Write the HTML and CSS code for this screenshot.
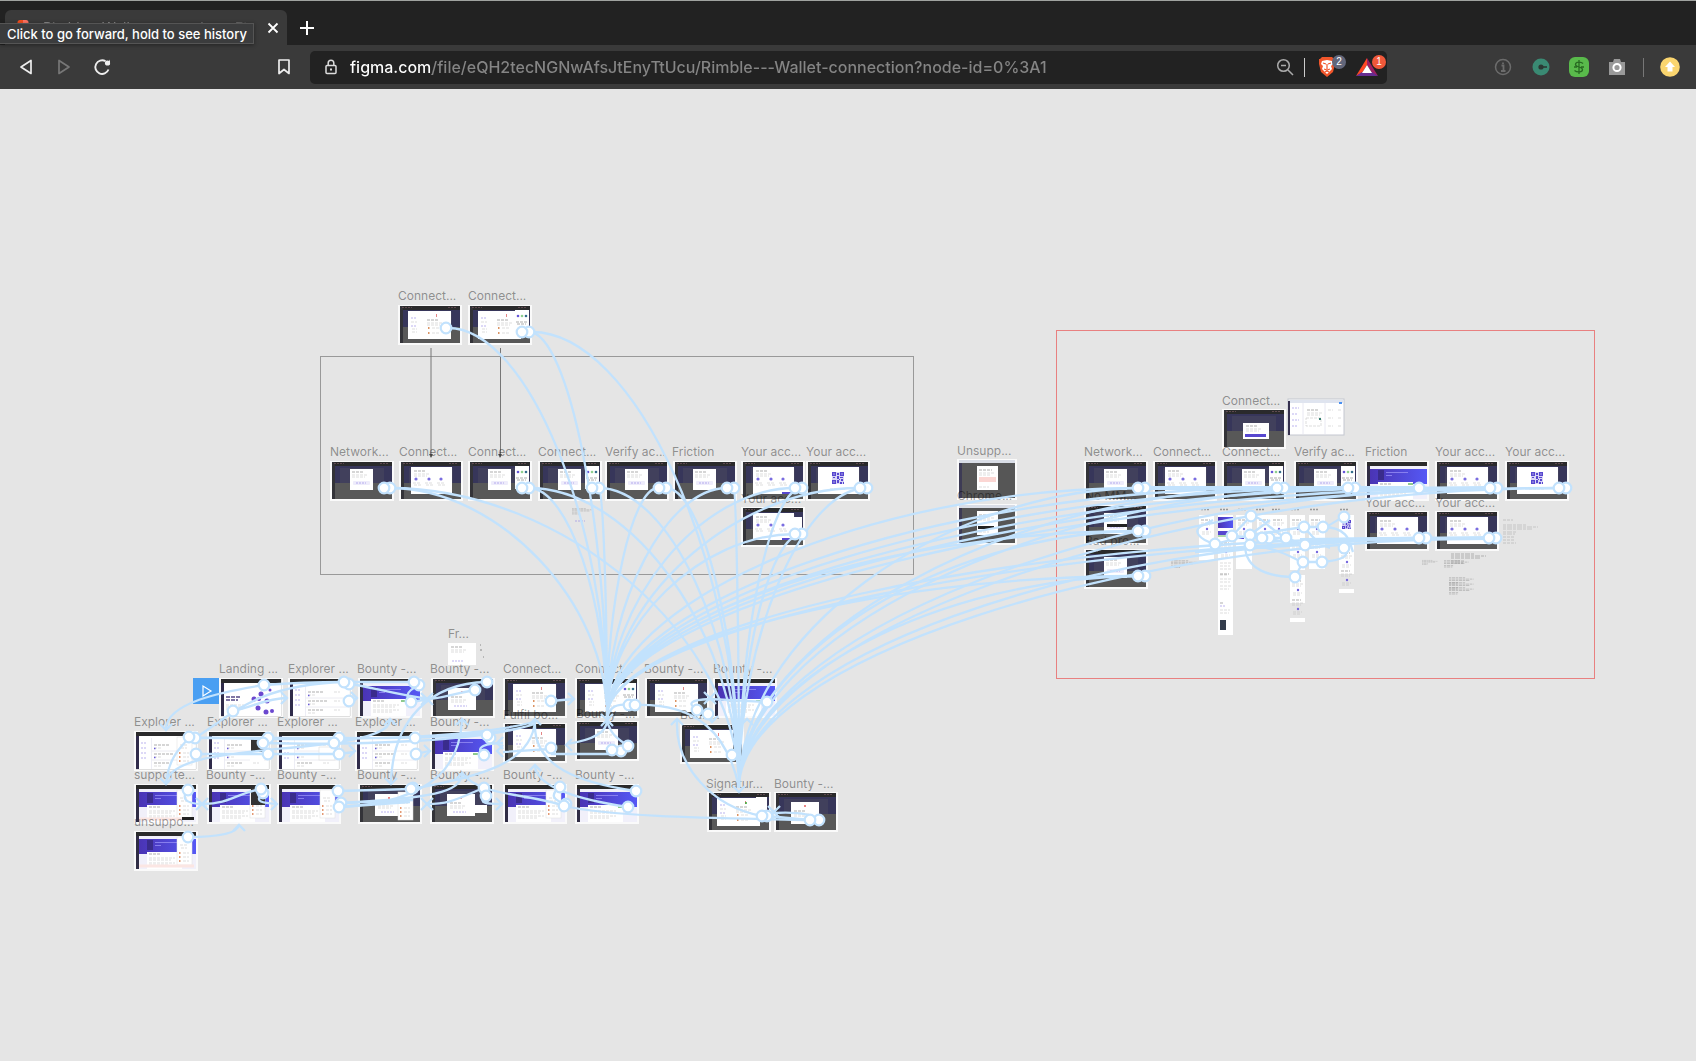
FILE: index.html
```html
<!DOCTYPE html>
<html lang="en">
<head>
<meta charset="utf-8">
<title>Rimble - Wallet connection – Figma</title>
<link rel="stylesheet" href="styles.css">
</head>
<body>
<header class="browser">
  <div class="tabstrip">
    <div class="tab">
      <svg class="favicon" width="12" height="16" viewBox="0 0 12 16"><path d="M3 0h3v5H3a2.500 2.500 0 0 1 0-5z" fill="#f24e1e"/><path d="M6 0h3a2.500 2.500 0 0 1 0 5H6z" fill="#ff7262"/><circle cx="8.500" cy="8" r="2.500" fill="#1abcfe"/></svg>
      <span class="tab-title">Rimble - Wallet connection – Figma</span>
      <button class="icon-btn tab-close" aria-label="Close tab"><svg width="12" height="12" viewBox="0 0 12 12"><path d="M1.500 1.500l9 9M10.500 1.500l-9 9" stroke="#fff" stroke-width="1.800"/></svg></button>
    </div>
    <button class="icon-btn new-tab" aria-label="New tab"><svg width="14" height="14" viewBox="0 0 14 14"><path d="M7 0v14M0 7h14" stroke="#fff" stroke-width="2"/></svg></button>
    <div class="tooltip" role="tooltip">Click to go forward, hold to see history</div>
  </div>
  <div class="toolbar">
    <nav class="nav">
      <button class="icon-btn" aria-label="Back"><svg width="16" height="18" viewBox="0 0 16 18"><path d="M13 2.500v13L3 9z" fill="none" stroke="#eee" stroke-width="1.700" stroke-linejoin="round"/></svg></button>
      <button class="icon-btn" aria-label="Forward"><svg width="16" height="18" viewBox="0 0 16 18"><path d="M3 2.500v13L13 9z" fill="none" stroke="#777" stroke-width="1.700" stroke-linejoin="round"/></svg></button>
      <button class="icon-btn" aria-label="Reload"><svg width="18" height="18" viewBox="0 0 18 18"><path d="M15.500 11.500A6.800 6.800 0 1 1 12.500 3.200" fill="none" stroke="#eee" stroke-width="1.900"/><circle cx="14.500" cy="5" r="2.600" fill="#eee"/><path d="M17 1.500v5h-3z" fill="#eee"/></svg></button>
      <button class="icon-btn bookmark" aria-label="Bookmark"><svg width="14" height="18" viewBox="0 0 14 18"><path d="M2 2h10v13.500l-5-4-5 4z" fill="none" stroke="#eee" stroke-width="1.700" stroke-linejoin="round"/></svg></button>
    </nav>
    <div class="omnibox">
      <svg width="14" height="16" viewBox="0 0 14 16"><rect x="2" y="6.500" width="10" height="8" rx="1" fill="none" stroke="#ddd" stroke-width="1.500"/><path d="M4.200 6V4a2.800 2.800 0 0 1 5.600 0v2" fill="none" stroke="#ddd" stroke-width="1.500"/><rect x="6" y="9.500" width="2" height="2" fill="#ddd"/></svg>
      <input class="url" type="text" aria-label="Address" value="figma.com/file/eQH2tecNGNwAfsJtEnyTtUcu/Rimble---Wallet-connection?node-id=0%3A1">
      <button class="icon-btn" aria-label="Zoom"><svg width="18" height="18" viewBox="0 0 18 18"><circle cx="7.500" cy="7.500" r="5.800" fill="none" stroke="#aaa" stroke-width="1.500"/><path d="M5 7.500h5M12 12l5 5" stroke="#aaa" stroke-width="1.500"/></svg></button>
      <span class="divider light"></span>
      <button class="icon-btn shields" aria-label="Brave Shields"><svg width="20" height="22" viewBox="0 0 20 22"><path d="M5 1h10l2 2 1 0 0 5-2 8-6 5-6-5L2 8V3l1 0z" fill="#f1562b"/><path d="M5 5l5-1 5 1 1 3-2 2 1 3-5 5-5-5 1-3-2-2z" fill="#fff"/><path d="M6 7l3 1M14 7l-3 1M10 8v5M7 13l3 1 3-1M8 16l2-1 2 1" stroke="#f1562b" stroke-width="1.200" fill="none"/></svg><span class="badge gray">2</span></button>
      <button class="icon-btn rewards" aria-label="Brave Rewards"><svg width="22" height="18" viewBox="0 0 22 18"><path d="M11 0L0 18l6-3 5-8z" fill="#ff4724"/><path d="M11 0l11 18-6-3-5-8z" fill="#9e1f63"/><path d="M0 18h22l-6-4H6z" fill="#662d91"/><path d="M11 7l5 8H6z" fill="#fff"/></svg><span class="badge orange">1</span></button>
    </div>
    <div class="extensions">
      <button class="icon-btn" aria-label="Site info"><svg width="18" height="18" viewBox="0 0 18 18"><circle cx="9" cy="9" r="7.500" fill="none" stroke="#6c6c6c" stroke-width="1.500"/><path d="M7.500 7.500H9.500V13M7 13h4.500M9 4.500v1.500" stroke="#6c6c6c" stroke-width="1.800" fill="none"/></svg></button>
      <button class="icon-btn" aria-label="Extension"><svg width="18" height="18" viewBox="0 0 18 18"><circle cx="9" cy="9" r="8.500" fill="#3a8a73"/><circle cx="9" cy="9" r="2.600" fill="#2c3934"/><path d="M9 9h6" stroke="#2c3934" stroke-width="1.600"/></svg></button>
      <button class="icon-btn" aria-label="Payments"><svg width="20" height="20" viewBox="0 0 20 20"><rect x="0" y="0" width="20" height="20" rx="6" fill="#59ba4b"/><path d="M14 6.500C12 4.500 6.500 4.500 6.500 7.500S13.500 9.500 13.500 12.500 8 15.500 5.500 13.500M10 3v14M5 10h3M12 10h3" fill="none" stroke="#286a22" stroke-width="1.300"/></svg></button>
      <button class="icon-btn" aria-label="Screenshot"><svg width="18" height="18" viewBox="0 0 18 18"><path d="M1 4h4l1-3h6l1 3h4v13H1z" fill="#999"/><circle cx="9" cy="9.500" r="3.600" fill="#999" stroke="#fff" stroke-width="2"/></svg></button>
      <span class="divider"></span>
      <button class="icon-btn" aria-label="Update"><svg width="20" height="20" viewBox="0 0 20 20"><circle cx="10" cy="10" r="9.800" fill="#fad56f"/><path d="M10 4.500l5 5.500h-2.500v4.500h-5V10H5z" fill="#fff"/></svg></button>
    </div>
  </div>
</header>
<main class="canvas">
<svg class="board" viewBox="0 89 1696 972" role="img" aria-label="Wallet connection flow">
  <defs>
    <linearGradient id="violet"><stop offset="0" stop-color="#4a34b4"/><stop offset="1" stop-color="#5558f5"/></linearGradient>
    <g id="dark"><rect width="64" height="40" fill="#fafafa"/><rect x="2" y="1" width="60" height="37" fill="#585858"/><rect x="2" y="5" width="60" height="17" fill="#37365a"/><path d="M10 22V7h44v15" fill="#41405c"/><rect x="2" y="1" width="60" height="4" fill="#2a2a2b"/><rect x="2" y="1" width="3" height="37" fill="#333338"/><path d="M4 2.500h10M50 2.500h8" stroke="#77595f" stroke-width=".7" stroke-dasharray="2 1"/></g>
    <g id="text"><path d="M0 1h12" class="ink"/><path d="M0 4h16M0 6h13" class="faint"/></g>
    <g id="small"><use href="#dark"/><rect x="20" y="8" width="23" height="21" fill="#fff"/><use href="#text" x="22" y="10"/><rect x="23" y="20" width="17" height="4" rx="1" fill="#eeecfb"/><path d="M26 22h10" class="vio"/></g>
    <g id="panel"><rect x="47" y="5" width="14" height="23" fill="#fff"/><circle cx="50" cy="11" r="1.300" fill="#6657d8"/><circle cx="54" cy="11" r="1.300" fill="#8fd08f"/><circle cx="58" cy="11" r="1.300" fill="#356f8c"/><path d="M48 17h11M49 19h9" class="ink"/></g>
    <g id="smallp"><use href="#small"/><use href="#panel"/></g>
    <g id="wide"><use href="#dark"/><rect x="12" y="6" width="41" height="27" fill="#fff"/><use href="#text" x="15" y="9"/><circle cx="17" cy="18" r="1.600" fill="#7a6de0"/><circle cx="30" cy="18" r="1.600" fill="#7a6de0"/><circle cx="42" cy="18" r="1.600" fill="#7a6de0"/><path d="M14 22h8M26 22h8M38 22h8M15 24h7M27 24h7M39 24h7" class="faint"/></g>
    <g id="large"><use href="#dark"/><rect x="10" y="6" width="43" height="28" fill="#fff"/><path d="M13 13h6M13 21h6" class="vio"/><path d="M13 17h6M14 24h5M14 27h5" class="faint"/><use href="#text" x="29" y="14"/><path d="M38.500 9v3" stroke="#d66" stroke-width=".8"/><path d="M30 23h1.500M30 28h1.500" stroke="#d07030" stroke-width="1.500"/><path d="M34 23h8M34 28h8" class="faint"/></g>
    <g id="largep"><use href="#large"/><use href="#panel"/></g>
    <g id="qr"><rect width="12" height="12" fill="#d9d5f6"/><path d="M0 0h4v4H0zM8 0h4v4H8zM0 8h4v4H0zM5 1h2v2H5zM5 4h2v3H5zM1 5h2v1H1zM8 5h3v1H8zM9 7h2v2H9zM5 8h2v3H5zM8 10h2v2H8zM11 10h1v2h-1zM7 7h1v1H7z" fill="#5747cf"/><path d="M1.500 1.500h1v1h-1zM9.500 1.500h1v1h-1zM1.500 9.500h1v1h-1z" fill="#fff"/></g>
    <g id="code"><use href="#dark"/><rect x="12" y="6" width="41" height="27" fill="#fff"/><use href="#qr" x="26" y="11"/><path d="M24 28h16" class="faint"/></g>
    <g id="tall"><use href="#dark"/><rect x="17" y="10" width="28" height="22" fill="#fff"/><path d="M31 13v2" stroke="#d44" stroke-width="1.300"/><use href="#text" x="20" y="18"/><path d="M23 28h13" class="vio"/></g>
    <g id="bounty"><rect width="64" height="40" fill="#fafafa"/><rect x="2" y="1" width="60" height="37" fill="#f1f0fa"/><rect x="2" y="1" width="60" height="4" fill="#2a2a2b"/><rect x="2" y="5" width="3" height="33" fill="#302d45"/><rect x="5" y="8" width="57" height="15" fill="url(#violet)"/><rect x="13" y="21" width="35" height="17" fill="#fff"/><rect x="13" y="9" width="6" height="10" fill="#3a2c8c"/><path d="M21 11.500h22M21 14.500h6" stroke="#958df5" stroke-width=".8"/><path d="M15 23h12" class="ink"/><path d="M15 27h26M15 29h22M15 32h26M15 34h20" class="faint"/><path d="M43 23h5" stroke="#68b868" stroke-width="1.500"/></g>
    <g id="side"><rect x="43" y="6" width="15" height="28" fill="#fff" stroke="#ddd" stroke-width=".5"/><path d="M46 14h7M47 17h6" class="faint"/><path d="M45 22h1.500M45 26h1.500M45 30h1.500" stroke="#da7a48" stroke-width="1.500"/><path d="M49 22h6M49 26h6M49 30h6" class="faint"/></g>
    <g id="bountys"><use href="#bounty"/><use href="#side"/></g>
    <g id="explore"><rect width="64" height="40" fill="#fafafa"/><rect x="2" y="1" width="60" height="37" fill="#fff"/><path d="M2 38.500h60M62.300 1v37" stroke="#ccc" stroke-width=".6"/><rect x="2" y="1" width="60" height="4" fill="#2a2a2b"/><rect x="2" y="5" width="3" height="33" fill="#2f2b4a"/><rect x="17" y="7" width="1" height="31" fill="#ededf5"/><path d="M7 12h6M7 17h5M7 22h6M7 27h5" class="vio"/><path d="M20 14h15M20 23h20M20 32h15" class="ink"/><path d="M20 17h8M20 26h8M20 35h8M46 14h6M46 23h6M46 32h6" class="faint"/><path d="M20 17.500h1.500M20 26.500h1.500" stroke="#6657d8" stroke-width="1.300"/><path d="M18 20h43M18 29h43" stroke="#ececf2"/></g>
    <g id="explores"><use href="#explore"/><use href="#side"/></g>
    <g id="chrome"><rect width="60" height="41" fill="#fafafa"/><rect x="2" y="1" width="56" height="3" fill="#d9dde6"/><rect x="2" y="4" width="56" height="35" fill="#565656"/><rect x="2" y="4" width="3" height="35" fill="#3d3b55"/><rect x="20" y="7" width="21" height="24" fill="#fff"/><path d="M22 11h13" class="ink"/><path d="M22 14h15M22 16h12M22 28h10" class="faint"/></g>
    <g id="phone"><path d="M2 3h9" class="ink"/><path d="M2 6h11M2 8h9M3 15h9M3 17h7" class="faint"/><circle cx="8" cy="12" r="1.200" fill="#7668de"/></g>
    <g id="note"><path d="M0 1h24M0 3h35M0 5h30M0 8h14M0 10h12" stroke="#999" stroke-width=".7" stroke-dasharray="3 1 5 1"/></g>
    <circle id="dot" r="5.300"/>
    <path id="up" d="M-6 6L0 0l6 6"/><path id="down" d="M-6-6L0 0l6-6"/><path id="right" d="M-6-6L0 0l-6 6"/><path id="left" d="M6-6L0 0l6 6"/><path id="cross" d="M-6-6L6 6M6-6L-6 6"/>
  </defs>

  <g class="frames">
    <rect x="320.500" y="356.500" width="593" height="218" stroke="#999"/>
    <rect x="1056.500" y="330.500" width="538" height="348" stroke="#e88080"/>
    <path d="M431 348v109M500.500 348v109" stroke="#777"/>
    <path d="M429 454h4l-2 4zM498 454h4l-2 4z" fill="#555"/>
  </g>

  <g class="screens">
    <use href="#large" x="398" y="305"/><use href="#largep" x="468" y="305"/>
    <use href="#small" x="330" y="461"/><use href="#wide" x="399" y="461"/><use href="#smallp" x="468" y="461"/><use href="#smallp" x="538" y="461"/><use href="#small" x="605" y="461"/><use href="#small" x="673" y="461"/><use href="#wide" x="741" y="461"/><use href="#code" x="806" y="461"/>
    <use href="#wide" x="741" y="507"/><rect x="788" y="517" width="14" height="14" fill="#fff"/>
    <rect x="782" y="538" width="9" height="2" fill="#5747cf"/><rect x="782" y="492" width="9" height="2" fill="#5747cf"/>
    <use href="#note" transform="translate(572 508) scale(.6)"/><path d="M575 521h10" class="vio"/>
    <use href="#chrome" x="957" y="459"/><rect x="979" y="477" width="17" height="5" fill="#fbd6d3"/>
    <use href="#chrome" x="957" y="504"/><rect x="978" y="526" width="16" height="3" fill="#222"/>
    <use href="#dark" x="1222" y="409"/><rect x="1243" y="423" width="26" height="16" fill="#fff"/><use href="#text" x="1246" y="425"/><rect x="1245" y="434" width="21" height="3" fill="#5747cf"/>
    <rect x="1288" y="399" width="56" height="36" fill="#fff" stroke="#c4c7d0"/><rect x="1289" y="400" width="54" height="3" fill="#dfe4ef"/><rect x="1288" y="401" width="2" height="34" fill="#35304e"/><path d="M1303 403v31M1325 403v31" stroke="#e8e8f2"/><path d="M1292 408h7M1292 414h5M1292 420h7M1292 426h5" class="vio"/><use href="#text" x="1307" y="409"/><path d="M1306 418h15v8h-15zM1328 410h5m5 0h4M1328 418h5m5 0h4M1328 426h5m5 0h4" class="faint"/><path d="M1319 419h2" stroke="#357e70" stroke-width="2"/><path d="M1339 403h3" stroke="#4a90f0" stroke-width="2"/>
    <use href="#small" x="1084" y="461"/><use href="#wide" x="1153" y="461"/><use href="#smallp" x="1222" y="461"/><use href="#smallp" x="1294" y="461"/><use href="#bounty" x="1365" y="461"/><use href="#wide" x="1435" y="461"/><use href="#code" x="1505" y="461"/>
    <use href="#small" x="1084" y="505"/><rect x="1107" y="524" width="20" height="3" fill="#222"/><use href="#small" x="1084" y="549"/>
    <use href="#wide" x="1365" y="511"/><use href="#wide" x="1435" y="511"/>
    <g fill="#fff">
      <rect x="1199" y="515" width="15" height="45"/><rect x="1218" y="515" width="15" height="120"/><rect x="1236" y="515" width="16" height="54"/><rect x="1257" y="515" width="14" height="28"/><rect x="1271" y="515" width="16" height="28"/><rect x="1290" y="515" width="15" height="55"/><rect x="1309" y="515" width="16" height="54"/><rect x="1339" y="515" width="15" height="59"/><rect x="1290" y="575" width="15" height="28"/><rect x="1290" y="618" width="15" height="4"/><rect x="1339" y="589" width="15" height="4"/>
    </g>
    <rect x="1218" y="517" width="15" height="11" fill="url(#violet)"/><rect x="1218" y="531" width="15" height="4" fill="#5747cf"/><path d="M1218 536h8" stroke="#58b058"/><rect x="1238" y="537" width="6" height="2" fill="#5747cf"/>
    <use href="#qr" transform="translate(1342 520) scale(.75)"/>
    <use href="#phone" x="1199" y="517"/><use href="#phone" x="1236" y="517"/><use href="#phone" x="1257" y="517"/><use href="#phone" x="1271" y="517"/><use href="#phone" x="1290" y="517"/><use href="#phone" x="1309" y="517"/><use href="#phone" x="1290" y="540"/><use href="#phone" x="1309" y="540"/><use href="#phone" x="1339" y="550"/><use href="#phone" x="1290" y="578"/><use href="#phone" x="1290" y="597"/><use href="#phone" x="1339" y="568"/>
    <use href="#phone" x="1218" y="540"/><path d="M1220 563h11M1220 566h10M1220 569h11M1220 575h8M1220 579h11M1220 582h10M1220 586h11M1220 589h9M1220 610h10M1220 613h9" class="faint"/><path d="M1220 574h9M1220 603h4" class="ink"/><path d="M1220 606h6" class="vio"/><rect x="1220" y="620" width="6" height="10" fill="#333c4c"/>
    <path d="M1201 509.500h8M1220 509.500h8M1238 509.500h8M1256 509.500h8M1272 509.500h8M1291 509.500h8M1310 509.500h8M1340 509.500h8" stroke="#999" stroke-width="1.500" stroke-dasharray="2 1"/>
    <use href="#note" transform="translate(1171 560) scale(.75)"/><use href="#note" x="1503" y="524" opacity=".6"/><path d="M1503 520h10M1503 537h12M1503 540h11M1503 543h13" class="ink" opacity=".5"/>
    <use href="#note" x="1451" y="553"/><use href="#note" transform="translate(1422 560) scale(.45)"/><use href="#note" transform="translate(1444 560) scale(.7)"/><use href="#note" transform="translate(1449 577) scale(.7)"/><use href="#note" transform="translate(1449 582) scale(.7)"/><use href="#note" transform="translate(1449 587) scale(.7)"/>
    <rect x="193" y="678" width="26" height="26" fill="#4a9ff2"/><path d="M203 686v10l8-5z" fill="none" stroke="#fff" stroke-width="1.200"/>
    <use href="#explore" x="219" y="678"/><rect x="224" y="683" width="57" height="33" fill="#fff"/><path d="M226 697h14M226 700h12" stroke="#554a86" stroke-width="1.500" stroke-dasharray="4 1"/><path d="M226 705h18M226 707h15M226 709h17" class="faint"/><g fill="#6b48cf"><circle cx="254" cy="699" r="2.500"/><circle cx="259" cy="699" r="2"/><circle cx="261" cy="694" r="2.500"/><circle cx="267" cy="701" r="2.500"/><circle cx="258" cy="708" r="2.500"/><circle cx="266" cy="712" r="2.500"/><circle cx="272" cy="711" r="2"/><circle cx="270" cy="690" r="1.500"/></g>
    <use href="#explore" x="288" y="678"/><use href="#bounty" x="358" y="678"/><use href="#tall" x="431" y="678"/><use href="#large" x="503" y="678"/><use href="#largep" x="575" y="678"/><use href="#large" x="645" y="678"/><use href="#bounty" x="713" y="678"/>
    <use href="#explores" x="134" y="731"/><use href="#explore" x="207" y="731"/><rect x="251" y="737" width="14" height="15" fill="#333"/><rect x="250" y="753" width="14" height="8" fill="#fff"/><use href="#explore" x="277" y="731"/><rect x="319" y="747" width="16" height="13" fill="#fff" stroke="#ddd" stroke-width=".6"/><use href="#explore" x="355" y="731"/><use href="#bounty" x="430" y="731"/>
    <use href="#large" x="503" y="723"/><use href="#small" x="575" y="721"/><use href="#large" x="680" y="724"/>
    <use href="#bountys" x="134" y="784"/><rect x="182" y="817" width="12" height="3" fill="#222"/><use href="#bounty" x="207" y="784"/><use href="#side" x="207" y="784"/><rect x="251" y="788" width="14" height="17" fill="#333"/><use href="#bountys" x="277" y="784"/><use href="#tall" x="358" y="784"/><use href="#side" x="355" y="786"/><use href="#tall" x="430" y="784"/><rect x="473" y="805" width="14" height="8" fill="#fff"/><use href="#bountys" x="503" y="784"/><use href="#bounty" x="575" y="784"/>
    <use href="#bountys" x="134" y="831"/><path d="M139 866h55" stroke="#fbe6e3" stroke-width="3"/><path d="M139 819h43" stroke="#fbe6e3" stroke-width="3"/>
    <use href="#large" x="707" y="792"/><rect x="756" y="797" width="11" height="13" fill="#fff"/><path d="M746 802v2" stroke="#3a3" stroke-width="1.500"/><use href="#tall" x="774" y="792"/>
    <rect x="448" y="643" width="28" height="22" fill="#fff"/><use href="#text" x="451" y="646"/><path d="M452 661h11" class="vio"/><path d="M480 645h1M480 650h2M483 657h1" stroke="#888"/>
  </g>

  <g class="labels">
    <text x="398" y="300">Connect...</text><text x="468" y="300">Connect...</text>
    <text x="330" y="456">Network...</text><text x="399" y="456">Connect...</text><text x="468" y="456">Connect...</text><text x="538" y="456">Connect...</text><text x="605" y="456">Verify ac...</text><text x="672" y="456">Friction</text><text x="741" y="456">Your acc...</text><text x="806" y="456">Your acc...</text><text x="741" y="503">Your acc...</text>
    <text x="957" y="455">Unsupp...</text><text x="957" y="500">Chrome...</text>
    <text x="1222" y="405">Connect...</text>
    <text x="1084" y="456">Network...</text><text x="1153" y="456">Connect...</text><text x="1222" y="456">Connect...</text><text x="1294" y="456">Verify ac...</text><text x="1365" y="456">Friction</text><text x="1435" y="456">Your acc...</text><text x="1505" y="456">Your acc...</text>
    <text x="1085" y="500">No MM...</text><text x="1085" y="545">Bad pro...</text><text x="1365" y="507">Your acc...</text><text x="1435" y="507">Your acc...</text>
    <text x="448" y="638">Fr...</text>
    <text x="219" y="673">Landing ...</text><text x="288" y="673">Explorer ...</text><text x="357" y="673">Bounty -...</text><text x="430" y="673">Bounty -...</text><text x="503" y="673">Connect...</text><text x="575" y="673">Connect...</text><text x="644" y="673">Bounty -...</text><text x="713" y="673">Bounty -...</text>
    <text x="134" y="726">Explorer ...</text><text x="207" y="726">Explorer ...</text><text x="277" y="726">Explorer ...</text><text x="355" y="726">Explorer ...</text><text x="430" y="726">Bounty -...</text><text x="503" y="719">Fulfil bo...</text><text x="576" y="718">Bounty -...</text><text x="680" y="719">Boun...</text>
    <text x="134" y="779">supporte...</text><text x="206" y="779">Bounty -...</text><text x="277" y="779">Bounty -...</text><text x="357" y="779">Bounty -...</text><text x="430" y="779">Bounty -...</text><text x="503" y="779">Bounty -...</text><text x="575" y="779">Bounty -...</text>
    <text x="134" y="826">unsuppo...</text><text x="706" y="788">Signatur...</text><text x="774" y="788">Bounty -...</text>
  </g>

  <g class="links">
    <path d="M448 328C528 328 607 522 607 717M529 332C568 332 607 524 607 717M390 488C498 488 607 602 607 717M529 488C568 488 607 602 607 717M599 488C603 488 607 602 607 717M658 488C632 488 607 602 607 717M727 488C667 488 607 602 607 717M795 488C701 488 607 602 607 717M859 488C733 488 607 602 607 717M795 534C701 534 607 625 607 717"/>
    <path d="M1138 488C872 488 607 602 607 717M1138 531C872 531 607 624 607 717M1138 576C872 576 607 646 607 717M1277 488C942 488 607 602 607 717M1348 488C978 488 607 602 607 717M1419 488C1013 488 607 602 607 717M1490 488C1048 488 607 602 607 717M1559 488C1083 488 607 602 607 717M1419 538C1013 538 607 627 607 717M1490 538C1048 538 607 627 607 717"/>
    <path d="M532 332C635 332 739 560 739 788M390 488C564 488 739 638 739 788M529 488C634 488 739 638 739 788M599 488C669 488 739 638 739 788M666 488C702 488 739 638 739 788M734 488C736 488 739 638 739 788M802 488C770 488 739 638 739 788M867 488C803 488 739 638 739 788M802 534C770 534 739 661 739 788"/>
    <path d="M1144 488C941 488 739 638 739 788M1144 531C941 531 739 660 739 788M1144 576C941 576 739 682 739 788M1284 488C1011 488 739 638 739 788M1354 488C1046 488 739 638 739 788M1496 488C1117 488 739 638 739 788M1566 488C1152 488 739 638 739 788M1426 538C1082 538 739 663 739 788M1496 538C1117 538 739 663 739 788"/>
    <use href="#cross" x="607" y="720"/><use href="#down" x="739" y="792"/>

    <path d="M264 685C220 692 168 703 166 728M233 711C253 707 267 698 287 698M195 738C230 717 253 685 344 682M264 685C290 683 320 682 344 682M344 682H412M349 684C373 687 387 693 429 699M349 701L357 698M195 738H339C430 739 500 735 535 724M263 743C360 745 480 742 535 724M188 737C300 741 460 741 534 722M334 743C373 737 390 730 390 720M196 754L339 754 354 752M334 743C253 753 173 753 166 782M189 737C183 747 170 753 166 782M188 790C182 797 183 804 203 804C230 804 237 793 261 789M263 793C253 802 263 803 277 804M338 791L412 789M341 803L413 800M339 807L410 802M188 837C213 837 237 835 239 825"/>
    <path d="M419 685C403 693 407 698 411 702L430 699M475 690C447 695 440 699 427 699M487 682C430 683 393 720 391 782M551 701L574 699M416 754L429 751M484 755C473 747 487 743 503 743M551 749L503 752M612 754H551M607 720C607 733 593 740 567 744M607 720C610 735 620 740 628 746M339 807C440 802 460 760 462 720M341 803C430 798 462 793 462 773M411 789C480 777 533 763 535 720M484 788C460 797 453 804 427 804M462 773C480 797 530 793 564 806M486 796C477 803 487 804 501 804M560 787C547 797 557 801 566 804M636 791C580 783 533 767 535 723M628 807C580 800 535 787 535 765M564 806C613 817 713 818 810 820M629 705C613 703 608 710 607 720M635 705C697 703 727 733 739 787"/>
    <path d="M697 710C687 703 690 700 710 699L767 702M708 714L712 720M762 816C713 807 675 767 677 720M819 820C810 812 790 812 773 813M767 816L810 820"/>
    <use href="#down" x="166" y="730"/><use href="#right" x="287" y="698"/><use href="#right" x="357" y="698"/><use href="#up" x="390" y="719"/><use href="#right" x="355" y="751"/><use href="#down" x="166" y="784"/><use href="#cross" x="202" y="804"/><use href="#right" x="277" y="804"/><use href="#up" x="239" y="825"/>
    <use href="#cross" x="427" y="699"/><use href="#right" x="574" y="699"/><use href="#up" x="462" y="719"/><use href="#up" x="535" y="719"/><use href="#right" x="430" y="751"/><use href="#down" x="391" y="784"/><use href="#left" x="497" y="743"/><use href="#left" x="497" y="751"/><use href="#left" x="566" y="745"/><use href="#up" x="462" y="773"/><use href="#cross" x="427" y="804"/><use href="#right" x="502" y="804"/><use href="#up" x="535" y="765"/>
    <use href="#cross" x="710" y="698"/><use href="#up" x="677" y="719"/><use href="#up" x="747" y="719"/><use href="#cross" x="774" y="812"/><use href="#down" x="712" y="722"/>

    <path d="M1215 544C1200 540 1190 530 1204 525L1213 520M1232 536L1251 516C1262 516 1270 530 1286 538M1215 544L1250 535 1304 527M1232 536L1262 538 1304 545M1245 545C1245 570 1270 577 1295 577M1250 545C1280 548 1295 560 1303 562L1322 562C1345 560 1350 555 1344 548M1304 527H1323C1350 527 1350 545 1353 552M1304 527C1315 540 1320 545 1330 548M1344 517C1335 520 1330 527 1323 527M1303 562L1295 577M1195 552L1360 541M1305 545L1286 538 1262 538M1250 535L1270 520"/>
    <path d="M1150 488H1419M1370 489L1490 488M1300 540L1490 538" stroke-width="4"/>
  </g>

  <g class="dots">
    <use href="#dot" x="446" y="328"/><use href="#dot" x="529" y="332"/><use href="#dot" x="522" y="332"/>
    <use href="#dot" x="390" y="488"/><use href="#dot" x="384" y="488"/><use href="#dot" x="529" y="488"/><use href="#dot" x="522" y="488"/><use href="#dot" x="599" y="488"/><use href="#dot" x="592" y="488"/><use href="#dot" x="666" y="488"/><use href="#dot" x="659" y="488"/><use href="#dot" x="734" y="488"/><use href="#dot" x="727" y="488"/><use href="#dot" x="802" y="488"/><use href="#dot" x="795" y="488"/><use href="#dot" x="867" y="488"/><use href="#dot" x="860" y="488"/><use href="#dot" x="802" y="534"/><use href="#dot" x="795" y="534"/>
    <use href="#dot" x="1145" y="488"/><use href="#dot" x="1138" y="488"/><use href="#dot" x="1145" y="531"/><use href="#dot" x="1138" y="531"/><use href="#dot" x="1145" y="576"/><use href="#dot" x="1138" y="576"/><use href="#dot" x="1284" y="488"/><use href="#dot" x="1277" y="488"/><use href="#dot" x="1355" y="488"/><use href="#dot" x="1348" y="488"/><use href="#dot" x="1419" y="488"/><use href="#dot" x="1497" y="488"/><use href="#dot" x="1490" y="488"/><use href="#dot" x="1566" y="488"/><use href="#dot" x="1559" y="488"/><use href="#dot" x="1426" y="538"/><use href="#dot" x="1419" y="538"/><use href="#dot" x="1496" y="538"/><use href="#dot" x="1489" y="538"/>
    <use href="#dot" x="264" y="685"/><use href="#dot" x="233" y="711"/><use href="#dot" x="349" y="684"/><use href="#dot" x="344" y="682"/><use href="#dot" x="349" y="701"/><use href="#dot" x="195" y="738"/><use href="#dot" x="189" y="737"/><use href="#dot" x="196" y="754"/><use href="#dot" x="268" y="738"/><use href="#dot" x="263" y="743"/><use href="#dot" x="268" y="754"/><use href="#dot" x="339" y="738"/><use href="#dot" x="334" y="743"/><use href="#dot" x="339" y="754"/><use href="#dot" x="188" y="790"/><use href="#dot" x="263" y="793"/><use href="#dot" x="261" y="789"/><use href="#dot" x="338" y="791"/><use href="#dot" x="341" y="803"/><use href="#dot" x="339" y="807"/><use href="#dot" x="188" y="837"/>
    <use href="#dot" x="419" y="685"/><use href="#dot" x="414" y="682"/><use href="#dot" x="411" y="702"/><use href="#dot" x="487" y="682"/><use href="#dot" x="475" y="690"/><use href="#dot" x="551" y="701"/><use href="#dot" x="629" y="705"/><use href="#dot" x="635" y="705"/><use href="#dot" x="415" y="738"/><use href="#dot" x="416" y="754"/><use href="#dot" x="490" y="738"/><use href="#dot" x="487" y="735"/><use href="#dot" x="484" y="755"/><use href="#dot" x="551" y="748"/><use href="#dot" x="621" y="751"/><use href="#dot" x="612" y="750"/><use href="#dot" x="628" y="746"/><use href="#dot" x="413" y="788"/><use href="#dot" x="411" y="789"/><use href="#dot" x="484" y="788"/><use href="#dot" x="486" y="796"/><use href="#dot" x="560" y="787"/><use href="#dot" x="566" y="804"/><use href="#dot" x="564" y="806"/><use href="#dot" x="636" y="791"/><use href="#dot" x="628" y="807"/>
    <use href="#dot" x="697" y="710"/><use href="#dot" x="708" y="714"/><use href="#dot" x="767" y="702"/><use href="#dot" x="732" y="755"/><use href="#dot" x="767" y="816"/><use href="#dot" x="762" y="816"/><use href="#dot" x="819" y="820"/><use href="#dot" x="810" y="820"/>
    <use href="#dot" x="1215" y="544"/><use href="#dot" x="1232" y="536"/><use href="#dot" x="1251" y="516"/><use href="#dot" x="1250" y="535"/><use href="#dot" x="1250" y="545"/><use href="#dot" x="1269" y="538"/><use href="#dot" x="1262" y="538"/><use href="#dot" x="1286" y="538"/><use href="#dot" x="1304" y="527"/><use href="#dot" x="1323" y="527"/><use href="#dot" x="1305" y="545"/><use href="#dot" x="1303" y="562"/><use href="#dot" x="1322" y="562"/><use href="#dot" x="1295" y="577"/><use href="#dot" x="1344" y="517"/><use href="#dot" x="1344" y="548"/>
  </g>
</svg>
</main>
</body>
</html>
```
FILE: styles.css
```css
* { box-sizing: border-box; }
body {
  margin: 0;
  min-height: 100vh;
  display: flex;
  flex-direction: column;
  background: #e5e5e5;
  font-family: Inter, "Liberation Sans", sans-serif;
}
.icon-btn {
  display: flex;
  align-items: center;
  justify-content: center;
  width: 32px;
  height: 32px;
  padding: 0;
  border: 0;
  background: none;
}
.tabstrip {
  position: relative;
  display: flex;
  align-items: flex-end;
  gap: 4px;
  height: 45px;
  padding-left: 5px;
  background: #222;
  border-top: 1px solid #a0a3a0;
}
.tab {
  display: flex;
  align-items: center;
  width: 282px;
  height: 35px;
  padding-left: 12px;
  border-radius: 6px 6px 0 0;
  background: #3a3a3a;
}
.tab-title {
  flex: 1;
  margin-left: 14px;
  overflow: hidden;
  white-space: nowrap;
  color: #888;
  font-size: 14px;
  mask-image: linear-gradient(to right, #000 180px, transparent 214px);
}
.tab-close { width: 28px; }
.new-tab { height: 35px; }
.tooltip {
  position: absolute;
  left: 0;
  bottom: 1px;
  height: 21px;
  padding: 0 6px 0 7px;
  border: 1px solid #555;
  border-left: 0;
  background: #3b3c3d;
  box-shadow: 0 1px 4px #0006;
  color: #fff;
  font-size: 13px;
  font-weight: 500;
  line-height: 20px;
  white-space: nowrap;
}
.toolbar {
  display: flex;
  align-items: center;
  height: 44px;
  background: #3a3a3a;
}
.nav {
  display: flex;
  gap: 6px;
  width: 310px;
  padding: 0 10px;
}
.bookmark { margin-left: auto; }
.omnibox {
  display: flex;
  align-items: center;
  flex: 1;
  min-width: 0;
  height: 33px;
  padding-left: 14px;
  border-radius: 5px;
  background: #222;
}
.url {
  flex: 1;
  min-width: 0;
  margin-left: 12px;
  padding: 0;
  border: 0;
  outline: 0;
  font: 500 16px/24px Inter, "Liberation Sans", sans-serif;
  color: transparent;
  background: linear-gradient(to right, #fff 82px, #858585 82px);
  -webkit-background-clip: text;
  background-clip: text;
}
.divider {
  width: 1px;
  height: 19px;
  background: #777;
}
.divider.light { background: #ccc; }
.omnibox .divider { margin-left: 3px; }
.shields, .rewards { position: relative; width: 40px; }
.shields { margin-left: 2px; }
.badge {
  position: absolute;
  right: 1px;
  top: 4px;
  width: 14px;
  height: 14px;
  border-radius: 7px;
  color: #fff;
  font-size: 10px;
  line-height: 14px;
  text-align: center;
}
.gray { background: #62667a; }
.orange { background: #f0583a; }
.extensions {
  display: flex;
  align-items: center;
  justify-content: flex-end;
  gap: 6px;
  width: 309px;
  padding-right: 10px;
}
.extensions .divider { margin: 0 4px; }
.canvas { flex: 1; overflow: hidden; }
.board { display: block; width: 100%; height: auto; }
.ink { stroke: #777; stroke-width: 0.6; stroke-dasharray: 3 1; }
.faint { fill: none; stroke: #bbb; stroke-width: 0.5; stroke-dasharray: 3 1; }
.vio { stroke: #8f82e4; stroke-width: 0.6; stroke-dasharray: 2 1; }
.frames rect { fill: none; }
.labels { fill: #000; fill-opacity: .4; font-size: 12px; }
.links { fill: none; stroke: #c2e2fd; stroke-width: 2.3; }
.dots { fill: #fff; stroke: #c2e2fd; stroke-width: 2.2; }
```
